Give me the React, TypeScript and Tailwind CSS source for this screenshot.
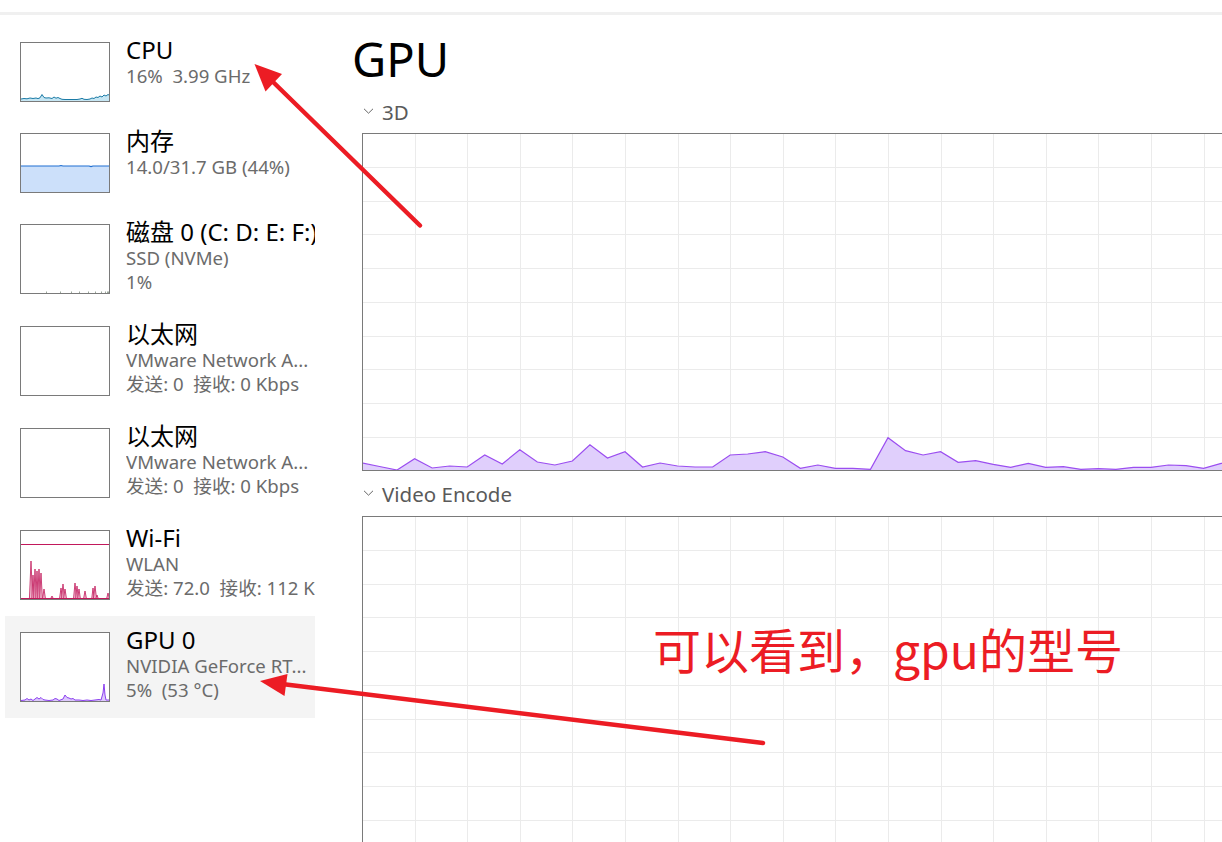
import React from "react";

const FONT = "font-['Noto_Sans','Noto_Sans_CJK_SC',sans-serif]";

type Pt = [number, number];

function areaPath(pts: Pt[], h: number) {
  const first = pts[0];
  const last = pts[pts.length - 1];
  return `M${first[0]},${h} ` + pts.map((p) => `L${p[0]},${p[1]}`).join(" ") + ` L${last[0]},${h} Z`;
}
function linePath(pts: Pt[]) {
  return pts.map((p, i) => `${i === 0 ? "M" : "L"}${p[0]},${p[1]}`).join(" ");
}

const cpuPts: Pt[] = [
  [0, 56], [3, 55.5], [6, 55.8], [9, 55], [12, 55.5], [15, 55], [17, 55.6], [19, 54.8], [21, 51.5], [23, 54.5],
  [25, 55], [28, 54.8], [31, 55.5], [33, 54], [35, 55.2], [37, 54.5], [39, 55.5], [41, 56.3], [44, 56.5], [48, 56.5],
  [52, 56.5], [56, 56.5], [59, 56], [61, 55.3], [63, 56.3], [66, 56.5], [69, 56], [71, 55], [73, 55.5], [75, 54],
  [77, 54.5], [79, 53], [81, 54], [83, 52], [85, 53], [87, 51.5], [88, 52],
];

const memPts: Pt[] = [
  [0, 32], [38, 32], [40, 31.5], [42, 32], [68, 32], [70, 32.6], [72, 32], [88, 32],
];

const gpuThumbPts: Pt[] = [
  [0, 67.5], [4, 67], [6, 65.5], [8, 67], [10, 66], [12, 67.5], [14, 66], [16, 64.5], [18, 66], [20, 64.5], [22, 66.5],
  [24, 67], [28, 67.5], [32, 67], [34, 65.5], [36, 66], [38, 67.5], [42, 66], [44, 62], [46, 64.5], [48, 65], [50, 66],
  [52, 65.5], [54, 67], [58, 67], [62, 67.5], [66, 67], [70, 67.5], [74, 67], [78, 66.5], [80, 67], [82, 60], [83, 51],
  [84, 62], [85, 67], [88, 67],
];

const wifiSpikes: [number, number, number][] = [
  [10, 30, 1.6], [12, 44, 1.2], [14, 38, 1.3], [16, 40, 1.2], [18, 38, 1.3], [20, 42, 1.4], [23, 58, 1.5],
  [31, 65, 1.5], [40, 57, 1.5], [42, 53, 1.5], [44, 58, 1.5], [54, 52, 1.5], [56, 55, 1.4], [58, 58, 1.4],
  [64, 60, 1.5], [72, 57, 1.3], [74, 55, 1.6], [76, 64, 1.4], [87, 62, 1.5],
];

const diskTicks = [25, 39, 50, 58, 67, 74, 80, 84, 86, 87];

function Thumb({ h, children }: { h: 60 | 70; children?: React.ReactNode }) {
  return (
    <div className={`w-[90px] ${h === 60 ? "h-[60px]" : "h-[70px]"} shrink-0 border border-[#7a7a7a] bg-white`}>
      <svg width={88} height={h - 2} className="block">
        {children}
      </svg>
    </div>
  );
}

function SideItem({
  thumb,
  title,
  lines,
  tall,
  selected,
}: {
  thumb: React.ReactNode;
  title: string;
  lines: string[];
  tall?: boolean;
  selected?: boolean;
}) {
  return (
    <div
      className={`flex w-[310px] items-start pl-[15px] pt-4 ${tall ? "h-[102px]" : "h-[91px]"} ${
        selected ? "bg-[#f4f4f4]" : ""
      }`}
    >
      {thumb}
      <div className="ml-4 -mt-[10.5px] min-w-0 flex-1 overflow-x-clip whitespace-pre pb-[3px]">
        <div className="text-[24px] leading-[35px] text-black">{title}</div>
        {lines.map((l, i) => (
          <div
            key={i}
            className={`text-[18.6px] leading-[24px] text-[#6b6b6b] ${i === 0 ? "-mt-[2.5px]" : ""}`}
          >
            {l}
          </div>
        ))}
      </div>
    </div>
  );
}

const gpuData = [
  7, 3.5, 0, 11.3, 2, 4, 3, 15, 6, 20.3, 8, 5, 9, 25.3, 12, 18.3, 3, 7, 4, 3, 3, 15, 16, 18.3, 13, 1.7, 5, 1.7, 1.7,
  0.7, 32.3, 19.3, 15, 18.3, 7.7, 9.3, 5.7, 2.7, 6.7, 2.7, 3.3, 0.7, 1.3, 0.7, 2.7, 2.7, 5, 4.3, 1.7, 6.7, 4, 3,
  2, 5, 3, 2, 4, 3, 2, 3,
];

function Grid({ top }: { top: number }) {
  const vs: number[] = [];
  for (let k = 1; k < 20; k++) vs.push(Math.round(362 + 52.6 * k) - 363 + 0.5);
  const hs: number[] = [];
  for (let k = 1; k < 10; k++) hs.push(Math.round(top + 33.75 * k) - (top + 1) + 0.5);
  return (
    <g stroke="#ebebeb" strokeWidth={1} shapeRendering="crispEdges">
      {vs.map((x) => (
        <line key={"v" + x} x1={x} y1={0} x2={x} y2={336} />
      ))}
      {hs.map((y) => (
        <line key={"h" + y} x1={0} y1={y} x2={1052} y2={y} />
      ))}
    </g>
  );
}

function Chevron() {
  return (
    <svg width={11} height={6} className="mt-2 ml-px block shrink-0">
      <path d="M1 0.8 L5.5 5.2 L10 0.8" fill="none" stroke="#666" strokeWidth={1} />
    </svg>
  );
}

export default function App() {
  const pts: Pt[] = gpuData.map((v, i) => [17.533 * i - 1, 336 - v]);
  return (
    <div className={`relative flex h-[842px] w-[1222px] flex-col overflow-hidden bg-white ${FONT}`}>
      <div className="h-3 shrink-0" />
      <div className="h-[3px] shrink-0 bg-[#f0f0f0]" />
      <div className="flex min-h-0 flex-1">
        <aside className="w-[340px] shrink-0 pl-[5px] pt-[11px]">
          <SideItem
            title="CPU"
            lines={["16%  3.99 GHz"]}
            thumb={
              <Thumb h={60}>
                <path d={areaPath(cpuPts, 58)} fill="#c6e6f3" />
                <path d={linePath(cpuPts)} fill="none" stroke="#1b7ba6" strokeWidth={1} />
              </Thumb>
            }
          />
          <SideItem
            title="内存"
            lines={["14.0/31.7 GB (44%)"]}
            thumb={
              <Thumb h={60}>
                <path d={areaPath(memPts, 58)} fill="#cce0fa" />
                <path d={linePath(memPts)} fill="none" stroke="#1f6fd1" strokeWidth={1.2} />
              </Thumb>
            }
          />
          <SideItem
            tall
            title="磁盘 0 (C: D: E: F:)"
            lines={["SSD (NVMe)", "1%"]}
            thumb={
              <Thumb h={70}>
                {diskTicks.map((x) => (
                  <rect key={x} x={x} y={66.5} width={1} height={1.5} fill="#9aa69a" />
                ))}
              </Thumb>
            }
          />
          <SideItem tall title="以太网" lines={["VMware Network A...", "发送: 0  接收: 0 Kbps"]} thumb={<Thumb h={70} />} />
          <SideItem tall title="以太网" lines={["VMware Network A...", "发送: 0  接收: 0 Kbps"]} thumb={<Thumb h={70} />} />
          <SideItem
            tall
            title="Wi-Fi"
            lines={["WLAN", "发送: 72.0  接收: 112 Kbps"]}
            thumb={
              <Thumb h={70}>
                <line x1={0} y1={13.5} x2={88} y2={13.5} stroke="#c2185b" strokeWidth={1} />
                {wifiSpikes.map(([x, y, w], i) => (
                  <path
                    key={i}
                    d={`M${x - w},68 L${x},${y} L${x + w},68 Z`}
                    fill="#f0bfd2"
                    stroke="#c2185b"
                    strokeWidth={0.8}
                  />
                ))}
                <line x1={0} y1={67.5} x2={88} y2={67.5} stroke="#c2185b" strokeWidth={1} />
              </Thumb>
            }
          />
          <SideItem
            tall
            selected
            title="GPU 0"
            lines={["NVIDIA GeForce RT...", "5%  (53 °C)"]}
            thumb={
              <Thumb h={70}>
                <path d={areaPath(gpuThumbPts, 68)} fill="#dcc8fb" />
                <path d={linePath(gpuThumbPts)} fill="none" stroke="#8b3ff0" strokeWidth={1} />
              </Thumb>
            }
          />
        </aside>
        <main className="min-w-0 flex-1 overflow-hidden pl-[22px]">
          <h1 className="-ml-[10px] mt-[20px] text-[47px] font-normal leading-[48px] text-black">GPU</h1>
          <div className="mt-[17px] flex h-6 items-start">
            <Chevron />
            <span className="ml-[8px] text-[20.5px] leading-6 text-[#5a5a5a]">3D</span>
          </div>
          <div className="mt-[9px] h-[338px] w-[1054px] border border-[#7a7a7a]">
            <svg width={1052} height={336} className="block">
              <Grid top={133} />
              <path d={areaPath(pts, 336)} fill="#e0cffc" />
              <path d={linePath(pts)} fill="none" stroke="#9b4ef0" strokeWidth={1.2} />
            </svg>
          </div>
          <div className="mt-[11px] flex h-6 items-start">
            <Chevron />
            <span className="ml-[8px] text-[20.5px] leading-6 text-[#5a5a5a]">Video Encode</span>
          </div>
          <div className="mt-[10px] h-[338px] w-[1054px] border border-[#7a7a7a]">
            <svg width={1052} height={336} className="block">
              <Grid top={516} />
            </svg>
          </div>
        </main>
      </div>

      {/* annotations */}
      <svg className="pointer-events-none absolute left-0 top-0" width={1222} height={842}>
        <g stroke="#ec1c24" strokeWidth={4.5} strokeLinecap="round" fill="none">
          <line x1={420} y1={225.5} x2={270} y2={79} />
          <line x1={763} y1={743} x2={282} y2={684} />
        </g>
        <g fill="#ec1c24">
          <polygon points="254.5,64 282,74 265.5,91.5" />
          <polygon points="260,681 287.5,674 284.5,696" />
        </g>
      </svg>
      <div className="absolute left-[653px] top-[624px] whitespace-nowrap font-['Noto_Sans_CJK_SC',sans-serif] text-[48px] leading-[48px] text-[#ec1c24]">
        可以看到，gpu的型号
      </div>
    </div>
  );
}
